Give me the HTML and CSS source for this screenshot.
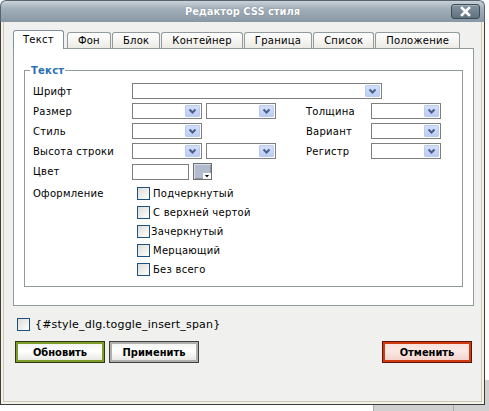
FILE: index.html
```html
<!DOCTYPE html>
<html lang="ru">
<head>
<meta charset="utf-8">
<title>Редактор CSS стиля</title>
<link rel="stylesheet" href="styles.css">
</head>
<body>
<div class="desk"><div class="desk-line"></div></div>
<div class="win">
  <div class="titlebar">
    <span></span>
    <span class="title">Редактор CSS стиля</span>
    <span class="close"><svg width="27" height="13" viewBox="0 0 27 13"><path d="M10 3 L17 10 M17 3 L10 10" stroke="#fff" stroke-width="2.6" stroke-linecap="square"/></svg></span>
  </div>
  <div class="body">
    <div class="tabs">
      <div class="tab active">Текст</div>
      <div class="tab">Фон</div>
      <div class="tab">Блок</div>
      <div class="tab">Контейнер</div>
      <div class="tab">Граница</div>
      <div class="tab">Список</div>
      <div class="tab">Положение</div>
    </div>
    <div class="panel">
      <fieldset class="fs">
        <legend>Текст</legend>
        <div class="row">
          <span class="lbl">Шрифт</span>
          <div class="sel sel-font"><span class="arr"><svg width="13" height="10" viewBox="0 0 13 10"><path d="M3.5 3.5 L6.5 6.5 L9.5 3.5" fill="none" stroke="#4a5f86" stroke-width="2"/></svg></span></div>
        </div>
        <div class="row">
          <span class="lbl">Размер</span>
          <div class="sel"><span class="arr"><svg width="13" height="10" viewBox="0 0 13 10"><path d="M3.5 3.5 L6.5 6.5 L9.5 3.5" fill="none" stroke="#4a5f86" stroke-width="2"/></svg></span></div>
          <div class="sel sel2"><span class="arr"><svg width="13" height="10" viewBox="0 0 13 10"><path d="M3.5 3.5 L6.5 6.5 L9.5 3.5" fill="none" stroke="#4a5f86" stroke-width="2"/></svg></span></div>
          <span class="lbl2">Толщина</span>
          <div class="sel"><span class="arr"><svg width="13" height="10" viewBox="0 0 13 10"><path d="M3.5 3.5 L6.5 6.5 L9.5 3.5" fill="none" stroke="#4a5f86" stroke-width="2"/></svg></span></div>
        </div>
        <div class="row">
          <span class="lbl">Стиль</span>
          <div class="sel"><span class="arr"><svg width="13" height="10" viewBox="0 0 13 10"><path d="M3.5 3.5 L6.5 6.5 L9.5 3.5" fill="none" stroke="#4a5f86" stroke-width="2"/></svg></span></div>
          <span class="skip"></span>
          <span class="lbl2">Вариант</span>
          <div class="sel"><span class="arr"><svg width="13" height="10" viewBox="0 0 13 10"><path d="M3.5 3.5 L6.5 6.5 L9.5 3.5" fill="none" stroke="#4a5f86" stroke-width="2"/></svg></span></div>
        </div>
        <div class="row">
          <span class="lbl">Высота строки</span>
          <div class="sel"><span class="arr"><svg width="13" height="10" viewBox="0 0 13 10"><path d="M3.5 3.5 L6.5 6.5 L9.5 3.5" fill="none" stroke="#4a5f86" stroke-width="2"/></svg></span></div>
          <div class="sel sel2"><span class="arr"><svg width="13" height="10" viewBox="0 0 13 10"><path d="M3.5 3.5 L6.5 6.5 L9.5 3.5" fill="none" stroke="#4a5f86" stroke-width="2"/></svg></span></div>
          <span class="lbl2">Регистр</span>
          <div class="sel"><span class="arr"><svg width="13" height="10" viewBox="0 0 13 10"><path d="M3.5 3.5 L6.5 6.5 L9.5 3.5" fill="none" stroke="#4a5f86" stroke-width="2"/></svg></span></div>
        </div>
        <div class="row row-color">
          <span class="lbl">Цвет</span>
          <span class="inp"></span>
          <span class="picker"><svg class="pick-tri" width="8" height="6" viewBox="0 0 8 6"><rect width="8" height="6" fill="#fff"/><path d="M2 2 L6 2 L4 4.5 Z" fill="#000"/></svg></span>
        </div>
        <div class="row row-deco">
          <span class="lbl">Оформление</span>
          <div class="checks">
            <div class="chk"><span class="cb"></span><span>Подчеркнутый</span></div>
            <div class="chk"><span class="cb"></span><span>С верхней чертой</span></div>
            <div class="chk"><span class="cb"></span><span class="tight">Зачеркнутый</span></div>
            <div class="chk"><span class="cb"></span><span>Мерцающий</span></div>
            <div class="chk"><span class="cb"></span><span>Без всего</span></div>
          </div>
        </div>
      </fieldset>
    </div>
    <div class="opt"><span class="cb"></span><span>{#style_dlg.toggle_insert_span}</span></div>
    <div class="buttons">
      <div class="btn-group">
        <span class="btn btn-green">Обновить</span>
        <span class="btn btn-gray">Применить</span>
      </div>
      <span class="btn btn-red">Отменить</span>
    </div>
  </div>
</div>
</body>
</html>
```

FILE: styles.css
```css
html, body {
  margin: 0;
  padding: 0;
}
body {
  position: relative;
  width: 489px;
  height: 411px;
  overflow: hidden;
  background: #fff;
  font-family: "DejaVu Sans", Verdana, sans-serif;
  font-size: 10px;
  letter-spacing: 0.25px;
  color: #000;
}
.desk {
  position: absolute;
  left: 373px;
  top: 380px;
  width: 116px;
  height: 31px;
  background: #d0d0d0;
  border-left: 1px solid #a3b1a3;
}
.desk-line {
  position: absolute;
  left: 79px;
  top: 0;
  bottom: 0;
  width: 1px;
  background: #a3b1a3;
}
.win {
  position: relative;
  width: 485px;
  height: 405px;
  display: flex;
  flex-direction: column;
}
.titlebar {
  height: 22px;
  box-sizing: border-box;
  border: 1px solid #58656f;
  border-bottom: none;
  border-radius: 6px 6px 0 0;
  background: linear-gradient(#c9d2d9 0, #a3b0ba 35%, #8797a4 100%);
  display: grid;
  grid-template-columns: 1fr auto 1fr;
  align-items: start;
}
.title {
  font-family: "DejaVu Sans Condensed", "DejaVu Sans", sans-serif;
  font-weight: bold;
  font-size: 11px;
  letter-spacing: 0;
  color: #fff;
  line-height: 13px;
  margin-top: 4px;
  text-shadow: 0 0 1px #5d6b77;
}
.close {
  justify-self: end;
  margin-top: 3px;
  margin-right: 4px;
  width: 27px;
  height: 13px;
  border: 1px solid #3f4c57;
  border-radius: 3px;
  background: linear-gradient(#8394a1, #5f707e);
  box-shadow: inset 0 1px 0 rgba(255,255,255,0.25);
  display: block;
}
.close svg {
  display: block;
}
.body {
  flex: 1;
  background: #f0f0ee;
  border: 1px solid #3c3c3c;
  border-top: none;
  box-shadow: inset 2px 0 0 #f5f2ea, inset -2px -2px 0 #f5f2ea, inset 3px 0 0 #cfc7b6, inset -3px -3px 0 #cfc7b6;
  padding: 8px 10px 0 12px;
  display: flex;
  flex-direction: column;
}
.tabs {
  display: flex;
  align-items: flex-end;
  gap: 1px;
  height: 19px;
  margin-left: 0;
  margin-bottom: -1px;
}
.tab {
  height: 17px;
  box-sizing: border-box;
  padding: 0 10px;
  line-height: 16px;
  border: 1px solid #919b9c;
  border-bottom: none;
  border-radius: 3px 3px 0 0;
  background: linear-gradient(#fefefe, #f3f2ee 60%, #e9e8e2);
  white-space: nowrap;
}
.tab.active {
  height: 19px;
  line-height: 18px;
  padding: 0 9px;
  margin-right: 2px;
  position: relative;
  z-index: 1;
  background: #fff;
  border-color: #7e90a2;
}
.panel {
  height: 258px;
  box-sizing: border-box;
  border: 1px solid #919b9c;
  background: #fff;
  padding: 15px 10px 0 10px;
}
.fs {
  margin: 0;
  border: 1px solid #919b9c;
  padding: 6px 8px 10px 8px;
  min-width: 0;
}
.fs legend {
  color: #2b6fb6;
  font-weight: bold;
  height: 13px;
  line-height: 13px;
  padding: 0 1px;
  margin-left: -3px;
}
.row {
  display: flex;
  align-items: center;
  height: 16px;
  margin-bottom: 4px;
}
.lbl {
  width: 99px;
  flex: none;
  white-space: nowrap;
  line-height: 13px;
}
.lbl2 {
  width: 65px;
  margin-left: 30px;
  flex: none;
  white-space: nowrap;
}
.skip {
  width: 74px;
  flex: none;
}
.sel {
  width: 70px;
  height: 16px;
  box-sizing: border-box;
  border: 1px solid #7f7f7f;
  background: #fff;
  padding: 1px 1px 1px 0;
  display: flex;
  justify-content: flex-end;
  flex: none;
}
.sel2 {
  margin-left: 4px;
}
.sel-font {
  width: 250px;
}
.arr {
  width: 15px;
  height: 12px;
  box-sizing: border-box;
  background: linear-gradient(#d3dffb, #bccdf5);
  border: 1px solid #b9cbf1;
  border-radius: 1px;
  display: block;
  overflow: hidden;
}
.arr svg {
  display: block;
}
.row-color {
  height: 17px;
  margin-bottom: 7px;
}
.inp {
  width: 57px;
  height: 16px;
  box-sizing: border-box;
  border: 1px solid #7f7f7f;
  background: #fff;
  flex: none;
}
.picker {
  width: 19px;
  height: 17px;
  box-sizing: border-box;
  margin-left: 4px;
  border: 1px solid #6f6f6f;
  background: #b3bbcf;
  box-shadow: inset 1px 1px 0 #d8dce6, inset -1px -1px 0 #8d93a3;
  display: flex;
  align-items: flex-end;
  justify-content: flex-end;
  flex: none;
}
.pick-tri {
  display: block;
}
.row-deco {
  height: auto;
  align-items: flex-start;
  margin-bottom: 0;
}
.checks {
  display: flex;
  flex-direction: column;
  gap: 6px;
}
.chk {
  display: flex;
  align-items: center;
  height: 13px;
  white-space: nowrap;
}
.cb {
  width: 13px;
  height: 13px;
  box-sizing: border-box;
  border: 1px solid #1c5180;
  background: linear-gradient(135deg, #dcdcd7, #ffffff);
  flex: none;
}
.chk .cb {
  margin-left: 5px;
  margin-right: 3px;
}
.chk .tight {
  margin-left: -2px;
}
.opt {
  display: flex;
  align-items: center;
  margin-top: 12px;
  margin-left: 4px;
  height: 13px;
  font-size: 11px;
  letter-spacing: 0.2px;
}
.opt .cb {
  margin-right: 5px;
}
.buttons {
  display: flex;
  justify-content: space-between;
  margin-top: 10px;
  padding: 0 2px;
}
.btn-group {
  display: flex;
  gap: 4px;
}
.btn {
  width: 90px;
  height: 22px;
  box-sizing: border-box;
  display: flex;
  align-items: center;
  justify-content: center;
  font-family: "DejaVu Sans Condensed", "DejaVu Sans", sans-serif;
  font-weight: bold;
  font-size: 11px;
  letter-spacing: 0;
  color: #000;
  border: 1px solid #333;
}
.btn-green {
  border-color: #2e3a12;
  background: linear-gradient(#f2f2ee, #ffffff 45%, #e4e4de);
  box-shadow: inset 0 0 0 2px #7f9b2a;
}
.btn-gray {
  border-color: #3f3f3f;
  background: linear-gradient(#f2f2ee, #ffffff 45%, #e4e4de);
  box-shadow: inset 0 0 0 2px #b0b0ac;
}
.btn-red {
  border-color: #5a1405;
  background: linear-gradient(#f8e0da, #fbe9e5 45%, #f0cfc7);
  box-shadow: inset 0 0 0 2px #d23a12;
}
```
